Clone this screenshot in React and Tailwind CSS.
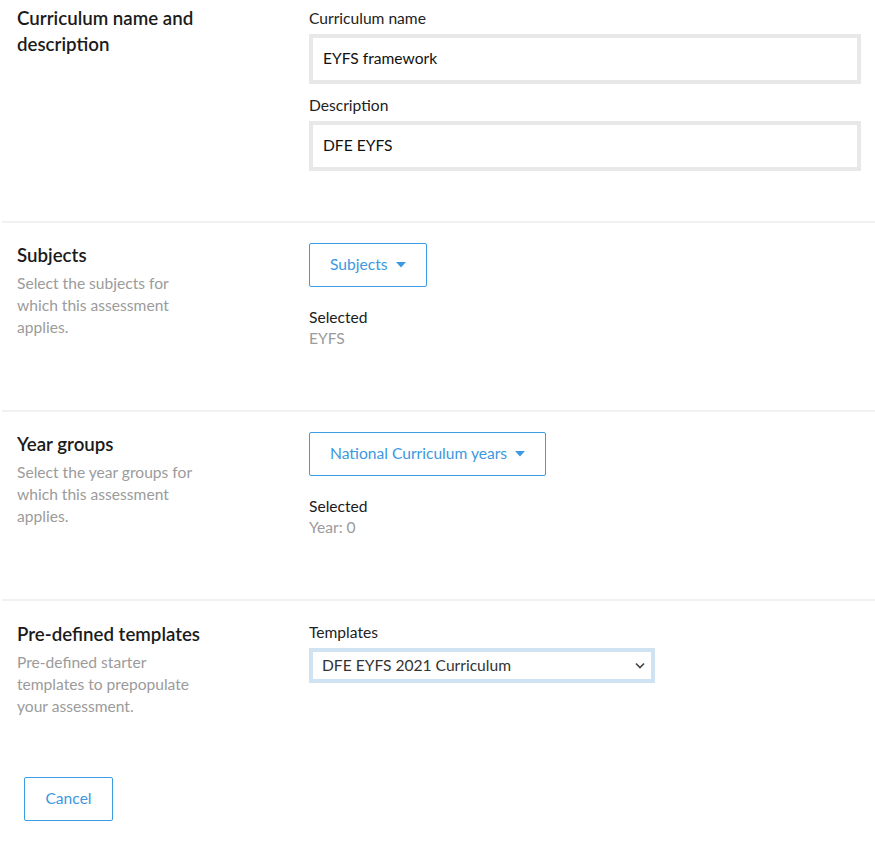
import React from 'react';

const font = { fontFamily: 'Lato, "Noto Sans", sans-serif' };

const Caret = () => (
  <svg width="10" height="6" viewBox="0 0 10 6" className="ml-[8px] inline-block">
    <path d="M0 0h10L5 5.5z" fill="currentColor" />
  </svg>
);

const SectionHead = ({ title, children }) => (
  <div>
    <h2 className="text-[18.7px] font-semibold leading-[26px] text-[#1b1b1b]">{title}</h2>
    {children && (
      <p className="mt-[4px] w-[185px] text-[15.6px] leading-[22px] text-[#9b9b9b]">{children}</p>
    )}
  </div>
);

const TextField = ({ label, value }) => (
  <div>
    <label className="block text-[15.6px] leading-[22px] text-[#222]">{label}</label>
    <div className="mt-[5px] flex h-[50px] items-center border-[4px] border-[#e8e8e8] px-[10px] text-[15.6px] text-[#111]">
      {value}
    </div>
  </div>
);

const Picker = ({ label, selected }) => (
  <div>
    <button className="flex h-[44px] items-center rounded-[2px] border border-[#3d9be1] px-[20px] text-[15.6px] text-[#3d98e0]">
      {label}
      <Caret />
    </button>
    <div className="mt-[19px] text-[15.6px] leading-[22px] text-[#1b1b1b]">Selected</div>
    <div className="text-[15.6px] leading-[21px] text-[#9b9b9b]">{selected}</div>
  </div>
);

export default function App() {
  return (
    <div className="min-h-screen bg-white pl-[2px]" style={font}>
      <section className="grid grid-cols-[292px_552px] pb-[50px] pl-[15px] pt-[5px]">
        <div className="w-[200px]">
          <SectionHead title="Curriculum name and description" />
        </div>
        <div className="flex flex-col gap-[10px] pt-[2px]">
          <TextField label="Curriculum name" value="EYFS framework" />
          <TextField label="Description" value="DFE EYFS" />
        </div>
      </section>

      <section className="grid grid-cols-[292px_552px] border-t-2 border-[#f1f1f1] pb-[61px] pl-[15px] pt-[20px]">
        <div className="-mt-[1px]">
          <SectionHead title="Subjects">Select the subjects for which this assessment applies.</SectionHead>
        </div>
        <Picker label="Subjects" selected="EYFS" />
      </section>

      <section className="grid grid-cols-[292px_552px] border-t-2 border-[#f1f1f1] pb-[61px] pl-[15px] pt-[20px]">
        <div className="-mt-[1px]">
          <SectionHead title="Year groups">Select the year groups for which this assessment applies.</SectionHead>
        </div>
        <Picker label="National Curriculum years" selected="Year: 0" />
      </section>

      <section className="grid grid-cols-[292px_552px] border-t-2 border-[#f1f1f1] pl-[15px] pt-[20px]">
        <SectionHead title="Pre-defined templates">
          Pre-defined starter templates to prepopulate your assessment.
        </SectionHead>
        <div>
          <label className="block text-[15.6px] leading-[22px] text-[#222]">Templates</label>
          <div className="mt-[5px] flex h-[35px] w-[346px] items-center justify-between border-[4px] border-[#cfe3f3] pl-[9px] pr-[6px] text-[15.6px] text-[#333]">
            <span>DFE EYFS 2021 Curriculum</span>
            <svg width="10" height="7" viewBox="0 0 10 7">
              <path d="M1 1.5l4 4 4-4" fill="none" stroke="#444" strokeWidth="1.6" />
            </svg>
          </div>
        </div>
      </section>

      <div className="pl-[22px] pt-[60px]">
        <button className="h-[44px] w-[89px] rounded-[2px] border border-[#3d9be1] text-[15.6px] text-[#3d98e0]">
          Cancel
        </button>
      </div>
    </div>
  );
}
